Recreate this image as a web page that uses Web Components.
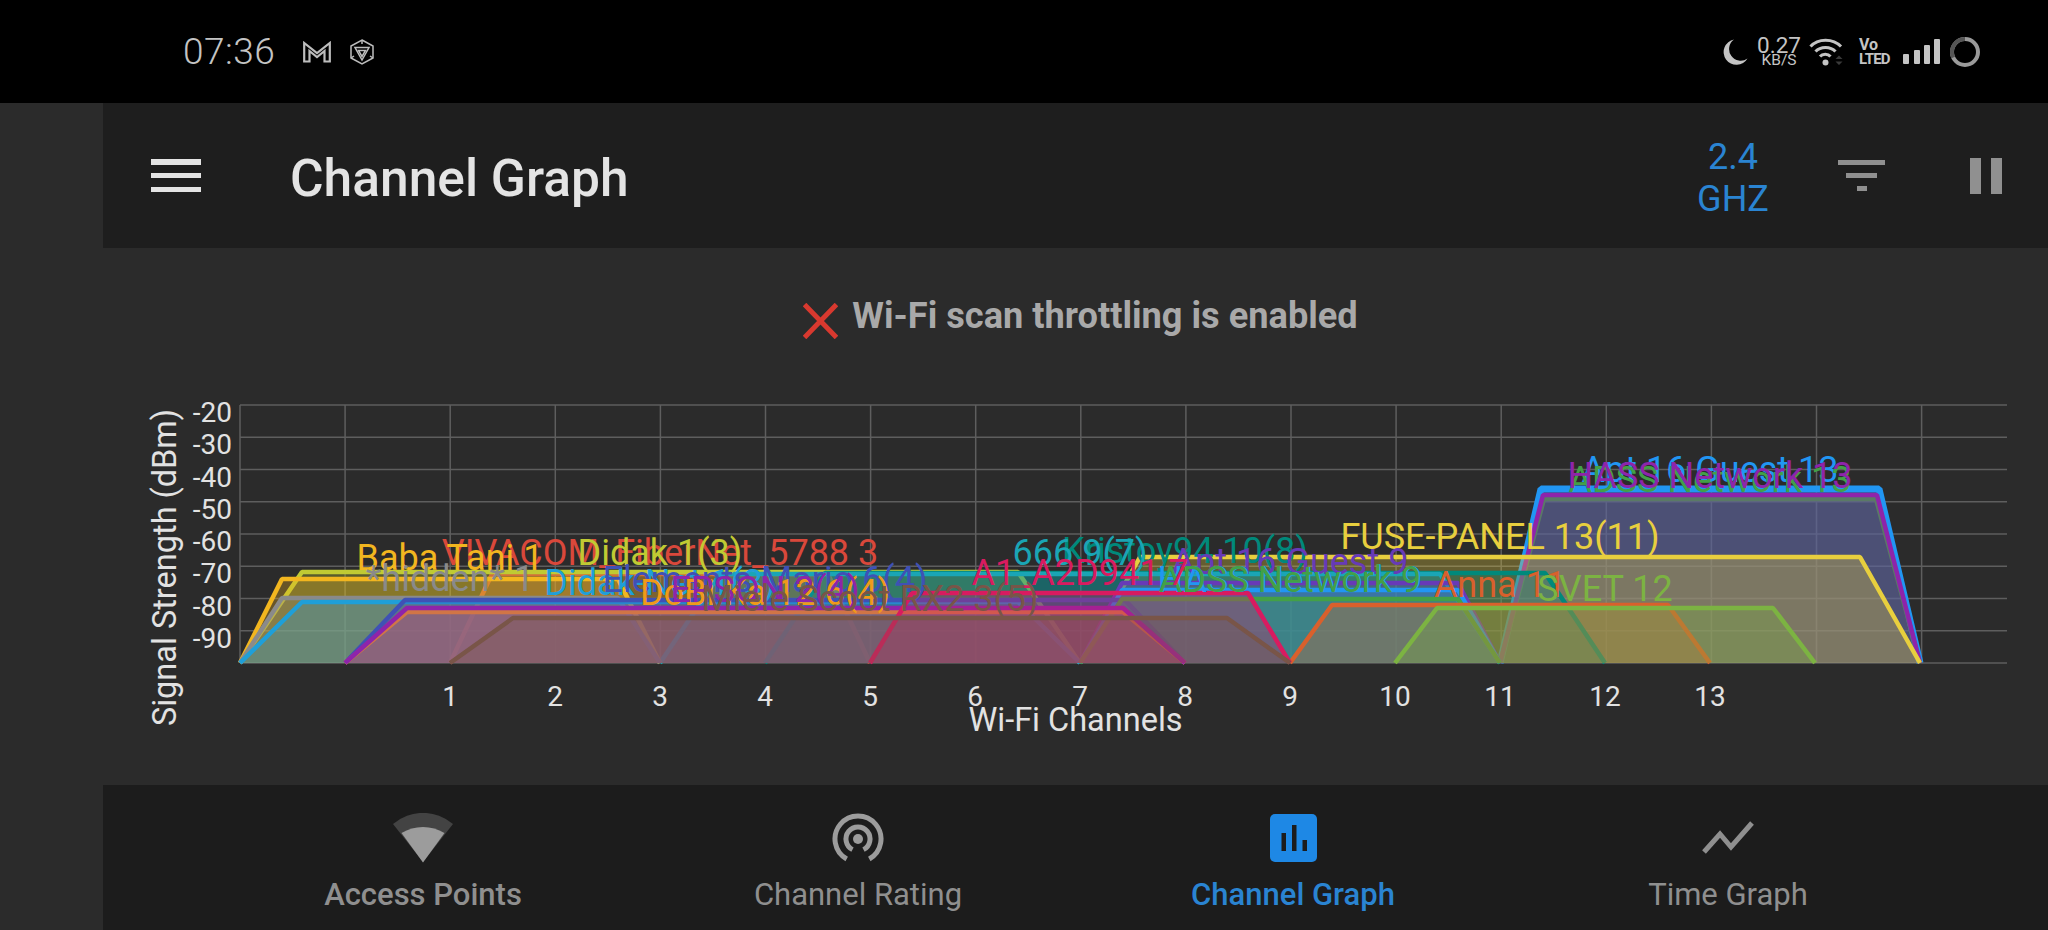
<!DOCTYPE html>
<html>
<head>
<meta charset="utf-8">
<style>
  html, body { margin: 0; height: 930px; overflow: hidden; background: #2b2b2b; font-family: Roboto, "Liberation Sans", sans-serif; }
  body { display: flex; flex-direction: column; }
  .app { flex: 1; display: flex; flex-direction: column; margin-left: 103px; min-height: 0; }
</style>
</head>
<body>
<status-bar></status-bar>
<div class="app">
  <app-bar title="Channel Graph"></app-bar>
  <throttle-note>Wi-Fi scan throttling is enabled</throttle-note>
  <channel-graph></channel-graph>
  <bottom-nav></bottom-nav>
</div>
<script>
class StatusBar extends HTMLElement {
    constructor() {
        super();
        this.attachShadow({ mode: 'open' }).innerHTML = `
            <style>
                :host { display: flex; align-items: center; height: 103px; background: #000; color: #c4c4c4; padding: 0 68px 0 183px; box-sizing: border-box; flex: none; }
                .time { font: 300 37px Roboto, sans-serif; width: 120px; letter-spacing: 0.5px; }
                svg { display: block; flex: none; }
                .left { display: flex; align-items: center; gap: 19px; }
                .right { margin-left: auto; display: flex; align-items: center; color: #c4c4c4; }
                .speed { display: flex; flex-direction: column; align-items: center; font-family: Roboto, sans-serif; width: 42px; margin: 0 9px 0 10px; line-height: 1; }
                .speed b { font-weight: 400; font-size: 22.500px; height: 18px; line-height: 18px; }
                .speed i { font-style: normal; font-size: 15.500px; height: 13px; line-height: 13px; }
                .volte { display: flex; flex-direction: column; font: 700 15px Roboto, sans-serif; line-height: 14px; margin: 0 14px 0 15px; width: 30px; letter-spacing: -0.8px; }
                .volte span:first-child { font-size: 16px; letter-spacing: 0; }
            </style>
            <span class="time">07:36</span>
            <div class="left">
                <svg width="28" height="22" viewBox="0 0 28 22" fill="none" stroke="#bdbdbd" stroke-width="2.2"><path d="M1.200 20.500V2L14 12 26.800 2V20.500H21.500V10L14 16 6.500 10V20.500Z"/></svg>
                <svg width="24" height="26" viewBox="0 0 24 26" fill="none" stroke="#bdbdbd" stroke-width="1.500"><path d="M12 1 23 7V19L12 25 1 19V7Z"/><path d="M5 8.500H19L12 21Z"/><path d="M8.500 11.500H15.500L12 17.500Z"/><path d="M12 1V5M1 19 4 17M23 19 20 17"/></svg>
            </div>
            <div class="right">
                <svg width="26" height="26" viewBox="0 0 26 26"><path fill="#c4c4c4" d="M12 0.500A12.800 12.800 0 1 0 25.500 19.500 11.500 11.500 0 0 1 12 0.500Z"/></svg>
                <div class="speed"><b>0.27</b><i>KB/S</i></div>
                <svg width="35" height="30" viewBox="0 0 35 30" fill="none" stroke="#c4c4c4" stroke-width="3"><path d="M1.500 9.500C9 1 24 1 32 9.500"/><path d="M6.500 14.500C11.500 9 21.500 9 26.500 14.500"/><path d="M11 19.500C13.500 16.500 19 16.500 21.500 19.500"/><circle cx="16.500" cy="25.500" r="3" fill="#c4c4c4" stroke="none"/><path d="M26.500 22 30 18.500 33.500 22ZM26.500 24.500 30 28 33.500 24.500Z" fill="#3a3a3a" stroke="none"/></svg>
                <div class="volte"><span>Vo</span><span>LTED</span></div>
                <svg width="37" height="26" viewBox="0 0 37 26" fill="#c4c4c4"><rect x="0" y="15" width="6" height="10" rx="1"/><rect x="11" y="11" width="6" height="14" rx="1"/><rect x="21" y="6" width="6" height="19" rx="1"/><rect x="31" y="0" width="6" height="25" rx="1"/></svg>
                <svg width="30" height="30" viewBox="0 0 30 30" style="margin-left:10px" fill="none" stroke-width="4"><circle cx="15" cy="15" r="13" stroke="#9a9a9a"/><path d="M3.200 20.500A13 13 0 0 1 15 2" stroke="#555"/></svg>
            </div>
        `;
    }
}

class AppBar extends HTMLElement {
    constructor() {
        super();
        this.attachShadow({ mode: 'open' }).innerHTML = `
            <style>
                :host { display: flex; align-items: center; height: 145px; background: #1e1e1e; flex: none; padding: 0 46px 0 48px; }
                .menu { width: 50px; height: 33px; display: flex; flex-direction: column; justify-content: space-between; }
                .menu i { display: block; height: 5.500px; background: #e4e4e4; }
                h1 { margin: 5px 0 0 89px; font: 500 51.500px Roboto, sans-serif; color: #e4e4e4; }
                .band { margin: 4px 0 0 auto; color: #2a84d2; font: 400 36px/42px Roboto, sans-serif; text-align: center; width: 72px; }
                svg { display: block; }
                .filter { margin-left: 69px; }
                .pause { margin-left: 85px; }
            </style>
            <div class="menu"><i></i><i></i><i></i></div>
            <h1>${this.getAttribute('title')}</h1>
            <div class="band">2.4<br>GHZ</div>
            <svg class="filter" width="47" height="31" viewBox="0 0 47 31" fill="#909090"><rect x="0" y="0" width="47" height="5"/><rect x="8" y="13" width="31" height="5"/><rect x="19" y="26" width="10" height="5"/></svg>
            <svg class="pause" width="32" height="36" viewBox="0 0 32 36" fill="#909090"><rect x="0" y="0" width="11" height="36"/><rect x="21" y="0" width="11" height="36"/></svg>
        `;
    }
}

class ThrottleNote extends HTMLElement {
    constructor() {
        super();
        this.attachShadow({ mode: 'open' }).innerHTML = `
            <style>
                :host { display: flex; align-items: center; justify-content: center; gap: 14px; height: 135px; padding-left: 10px; flex: none; color: #a9a9a9; font: 700 36.200px Roboto, sans-serif; }
                svg { display: block; margin-top: 10px; }
            </style>
            <svg width="35" height="36" viewBox="0 0 35 36" stroke="#d8392f" stroke-width="5" fill="none"><path d="M1.500 1.500 33.500 34.500M33.500 1.500 1.500 34.500"/></svg>
            <span><slot></slot></span>
        `;
    }
}

// channel position on screen: channel 1 at 450, 105px per channel
const chX = ch => 450 + (ch - 1) * 105;

// strongest first, so the weak ones paint over them like in the app
const NETWORKS = [
    // name, colour, first channel, last channel, top y, corner inset, label baseline, line width
    ['Apt 16 Guest 13', '#2196f3', 11, 15, 489, 41, 482, 7],
    ['ADSS Network 13', '#43a047', 11, 15, 499, 44, 492],
    ['HASS Network 13', '#8e24aa', 11, 15, 495, 43, 488],
    ['FUSE-PANEL 13(11)', '#e8cf3e', 7, 15, 557, 60, 549],
    ['VIVACOM_FiberNet_5788 3', '#d9483b', 1, 5, 574, 42, 565],
    ['Didak 1(3)', '#c0ca33', -1, 7, 572, 62, 565],
    ['Kristoy94 10(8)', '#00897b', 4, 12, 573, 60, 563],
    ['666 9(7)', '#1aa5b5', 3, 11, 574, 60, 565],
    ['Baba Tani 1', '#f2b61f', -1, 3, 579, 42, 570],
    ['Apt 16 Guest 9', '#673ab7', 7, 11, 583, 42, 574],
    ['HASS Network 9', '#2196f3', 7, 11, 590, 42, 592],
    ['*hidden* 1', '#8a8a8a', -1, 3, 598, 42, 591],
    ['Didak-Net 1(3)', '#1f9fd8', -1, 7, 602, 62, 595],
    ['Elements Mario 6(4)', '#3f51b5', 0, 8, 600, 60, 592],
    ['ADSS Network 9', '#43a047', 7, 11, 599, 42, 592],
    ['Anna 11', '#d9602c', 9, 13, 605, 42, 597],
    ['DoBi Ka 12 6(4)', '#ef9a1a', 0, 8, 612, 62, 605],
    ['EPSON 2(4)', '#8e24aa', 0, 8, 608, 62, 602],
    ['SVET 12', '#7cb342', 10, 14, 608, 42, 601],
    ['A1_A2D941 7', '#d81b60', 5, 9, 593, 42, 585],
    ['Miele Scoot RX2 3(5)', '#795548', 1, 9, 618, 63, 611],
];

class ChannelGraph extends HTMLElement {
    constructor() {
        super();
        const grid = [];
        for (let i = 0; i <= 8; i++) {
            const y = 405 + i * 32.25;
            grid.push(`<line x1="240" x2="2007" y1="${y}" y2="${y}"/>`);
        }
        for (let i = 0; i <= 16; i++) {
            const x = 240 + i * 105.1;
            grid.push(`<line x1="${x}" x2="${x}" y1="405" y2="663"/>`);
        }
        const yLabels = [];
        for (let v = 20; v <= 90; v += 10) {
            yLabels.push(`<text x="232" y="${422 + (v - 20) * 3.225}" text-anchor="end">-${v}</text>`);
        }
        const xLabels = [];
        for (let c = 1; c <= 13; c++) {
            xLabels.push(`<text x="${chX(c)}" y="706" text-anchor="middle">${c}</text>`);
        }
        const shapes = NETWORKS.map(([name, colour, from, to, top, inset, base, width]) => {
            const a = chX(from), b = chX(to);
            const pts = `${a},663 ${a + inset},${top} ${b - inset},${top} ${b},663`;
            return `<polygon points="${pts}" fill="${colour}" fill-opacity="0.31" stroke="none"/>
                    <polyline points="${pts}" fill="none" stroke="${colour}" stroke-width="${width || 4.5}" stroke-linejoin="bevel"/>`;
        }).join('');
        const names = NETWORKS.map(([name, colour, from, to, top, inset, base]) =>
            `<text x="${(chX(from) + chX(to)) / 2}" y="${base}" text-anchor="middle" fill="${colour}">${name}</text>`).join('');
        this.attachShadow({ mode: 'open' }).innerHTML = `
            <style>
                :host { display: block; flex: 1; min-height: 0; position: relative; }
                svg { position: absolute; left: -103px; top: -383px; display: block; }
                text { font-family: Roboto, sans-serif; }
                .grid line { stroke: #5e5e5e; stroke-width: 1.500; }
                .axis text { font-size: 28px; fill: #e2e2e2; }
                .title text { font-size: 32.500px; fill: #e2e2e2; }
                .names text { font-size: 36px; }
            </style>
            <svg width="2048" height="930" viewBox="0 0 2048 930">
                <g class="grid">${grid.join('')}</g>
                ${shapes}
                <g class="names">${names}</g>
                <g class="axis">${yLabels.join('')}${xLabels.join('')}</g>
                <g class="title">
                    <text transform="translate(176 567.500) rotate(-90)" text-anchor="middle">Signal Strength (dBm)</text>
                    <text x="1075.500" y="731" text-anchor="middle">Wi-Fi Channels</text>
                </g>
            </svg>
        `;
    }
}

class NavTab extends HTMLElement {
    constructor() {
        super();
        this.attachShadow({ mode: 'open' }).innerHTML = `
            <style>
                :host { display: flex; flex-direction: column; align-items: center; color: #8f8f8f; font: 400 31px Roboto, sans-serif; padding-top: 28px; }
                :host([bold]) { font-weight: 500; }
                :host([active]) { color: #2a84d2; }
                .icon { height: 50px; margin-bottom: 13px; display: flex; align-items: center; }
            </style>
            <div class="icon"><slot name="icon"></slot></div>
            <span><slot></slot></span>
        `;
    }
}

class BottomNav extends HTMLElement {
    constructor() {
        super();
        this.attachShadow({ mode: 'open' }).innerHTML = `
            <style>
                :host { display: grid; grid-template-columns: repeat(4, 435px); justify-content: center; height: 145px; background: #1c1c1c; flex: none; }
                svg { display: block; }
            </style>
            <nav-tab bold>
                <svg slot="icon" width="60" height="50" viewBox="0 0 60 50"><path fill="#434343" d="M0 11A46 46 0 0 1 60 11L30 49Z"/><path fill="#9c9c9c" d="M8.500 20A41.500 41.500 0 0 1 51.500 20L30 49.500Z"/></svg>
                Access Points
            </nav-tab>
            <nav-tab>
                <svg slot="icon" width="52" height="50" viewBox="0 0 52 50" fill="none" stroke="#9c9c9c"><path stroke-width="5" d="M14.700 46A23 23 0 1 1 37.300 46"/><path stroke-width="5" d="M20.500 36.600A12 12 0 1 1 31.500 36.600"/><circle cx="26" cy="26" r="5" fill="#9c9c9c" stroke="none"/></svg>
                Channel Rating
            </nav-tab>
            <nav-tab bold active>
                <svg slot="icon" width="47" height="48" viewBox="0 0 47 48"><rect width="47" height="48" rx="5" fill="#1e88e5"/><path fill="#1c1c1c" d="M11.500 19h4.500v18h-4.500zM22 11h4.500v26H22zM32.500 26H37v11h-4.500z"/></svg>
                Channel Graph
            </nav-tab>
            <nav-tab>
                <svg slot="icon" width="52" height="34" viewBox="0 0 52 34" fill="none" stroke="#8f8f8f" stroke-width="5"><path d="M2 31 18 13 29 26 50 2"/></svg>
                Time Graph
            </nav-tab>
        `;
    }
}

customElements.define('status-bar', StatusBar);
customElements.define('app-bar', AppBar);
customElements.define('throttle-note', ThrottleNote);
customElements.define('channel-graph', ChannelGraph);
customElements.define('nav-tab', NavTab);
customElements.define('bottom-nav', BottomNav);
</script>
</body>
</html>
